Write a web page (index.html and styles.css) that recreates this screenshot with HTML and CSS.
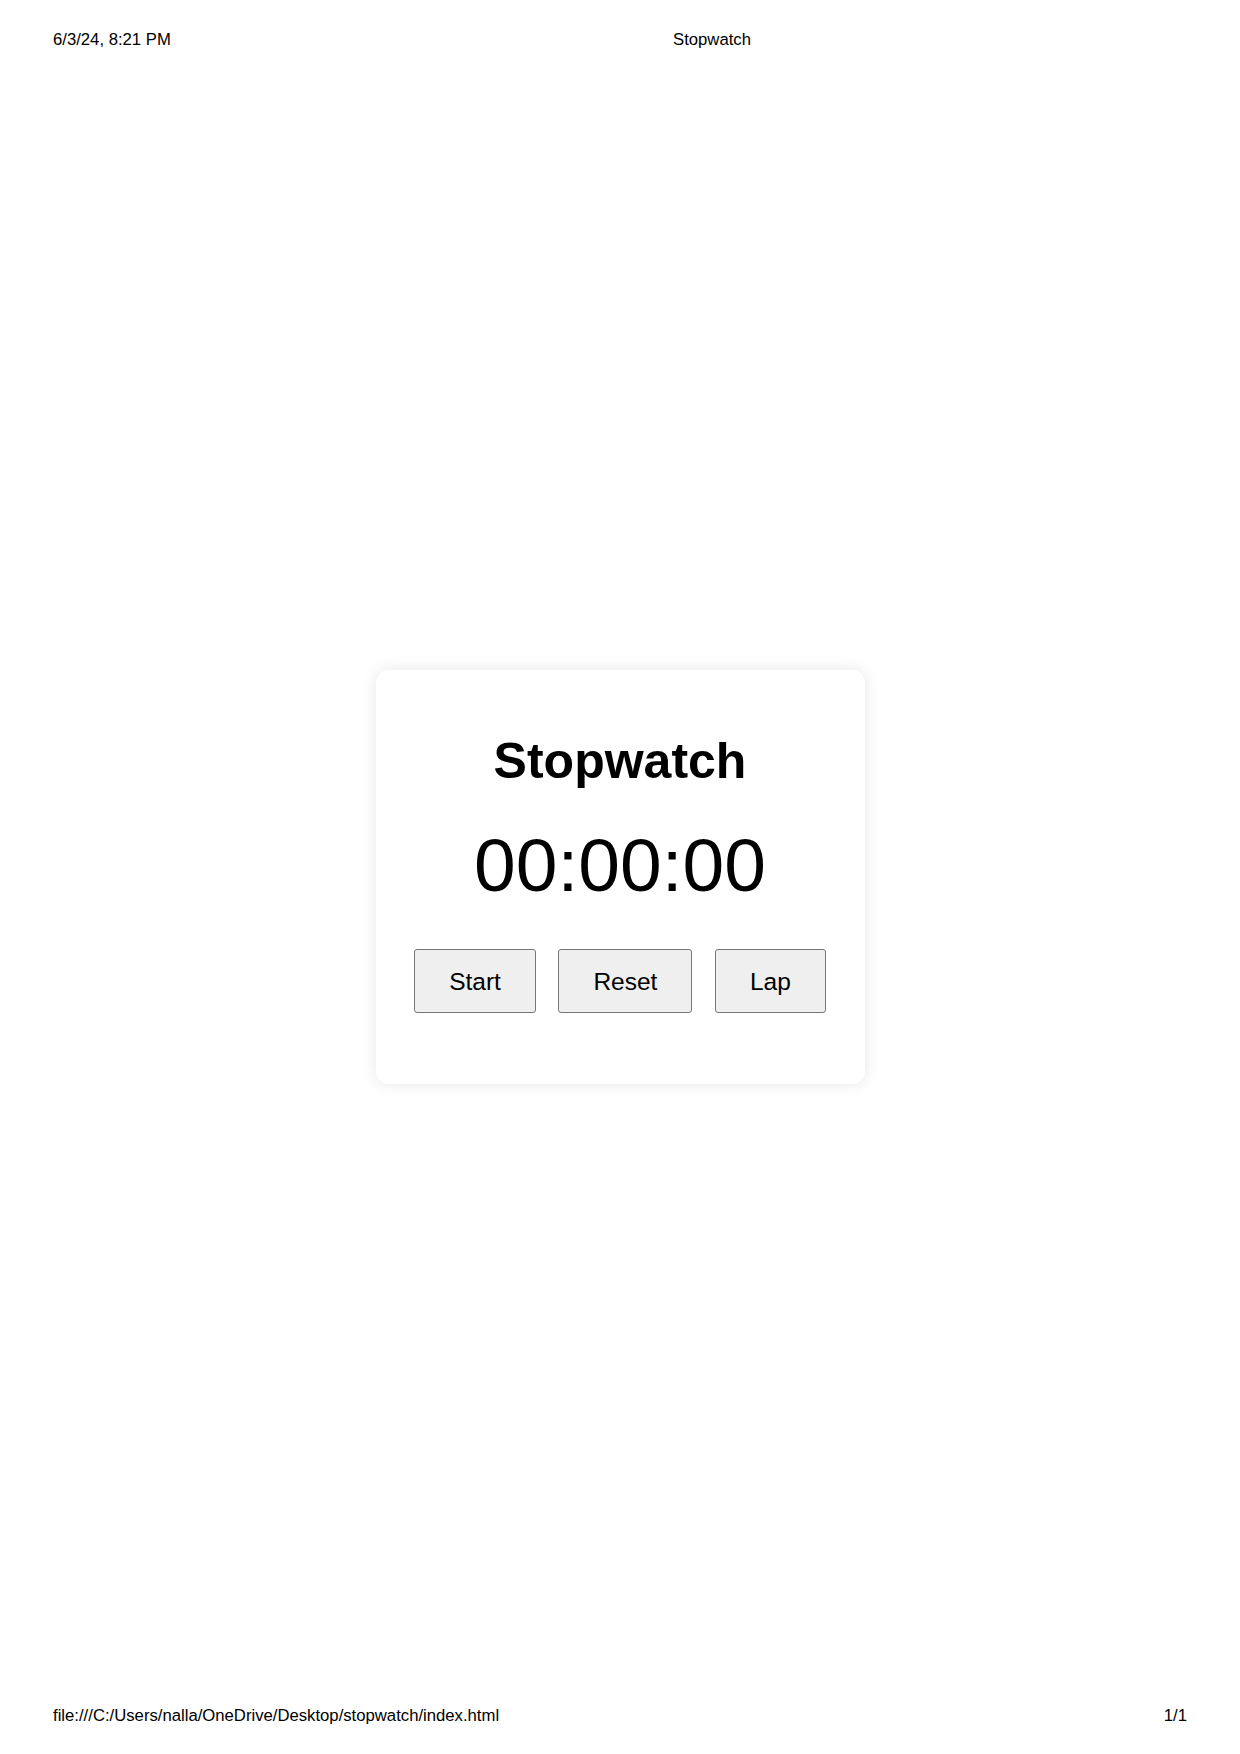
FILE: index.html
```html
<!DOCTYPE html>
<html lang="en">
<head>
<meta charset="utf-8">
<title>Stopwatch</title>
<link rel="stylesheet" href="styles.css">
</head>
<body>
<div class="page">
  <header class="print-header">
    <span class="print-date">6/3/24, 8:21 PM</span>
    <span class="print-title">Stopwatch</span>
  </header>
  <main class="stage">
    <section class="card">
      <h1 class="card-title">Stopwatch</h1>
      <div class="timer">00:00:00</div>
      <div class="controls">
        <button class="btn" type="button">Start</button>
        <button class="btn" type="button">Reset</button>
        <button class="btn" type="button">Lap</button>
      </div>
    </section>
  </main>
  <footer class="print-footer">
    <span class="print-url">file:///C:/Users/nalla/OneDrive/Desktop/stopwatch/index.html</span>
    <span class="print-page">1/1</span>
  </footer>
</div>
</body>
</html>
```
FILE: styles.css
```css
* { box-sizing: border-box; }
html, body { margin: 0; padding: 0; background: #fff; }
body {
  font-family: "Liberation Sans", Arial, sans-serif;
  color: #000;
}
.page {
  width: 1240px;
  height: 1754px;
  display: grid;
  grid-template-rows: 60px 1fr 60px;
}
.print-header {
  display: grid;
  grid-template-columns: 620px 1fr;
  padding: 30px 53px 0 53px;
  font-size: 16.7px;
  line-height: 20px;
}
.print-footer {
  display: flex;
  justify-content: space-between;
  padding: 12px 53px 0 53px;
  font-size: 16.7px;
  line-height: 20px;
}
.stage {
  display: flex;
  align-items: center;
  justify-content: center;
}
.card {
  width: 489px;
  background: #fff;
  border-radius: 12.5px;
  box-shadow: 0 0 16px rgba(0, 0, 0, 0.1);
  padding: 61.5px 0 71px 0;
  display: flex;
  flex-direction: column;
  align-items: center;
}
.card-title {
  margin: 0;
  font-size: 50px;
  line-height: 58px;
  font-weight: bold;
}
.timer {
  margin-top: 32.5px;
  font-size: 75px;
  line-height: 86px;
}
.controls {
  margin-top: 41px;
  display: flex;
  gap: 22.5px;
}
.btn {
  font-family: "Liberation Sans", Arial, sans-serif;
  font-size: 24.5px;
  line-height: 29px;
  padding: 16.5px 34px 16.5px 34px;
  border: 1.5px solid #777;
  border-radius: 3px;
  background: #efefef;
  color: #000;
}
```
